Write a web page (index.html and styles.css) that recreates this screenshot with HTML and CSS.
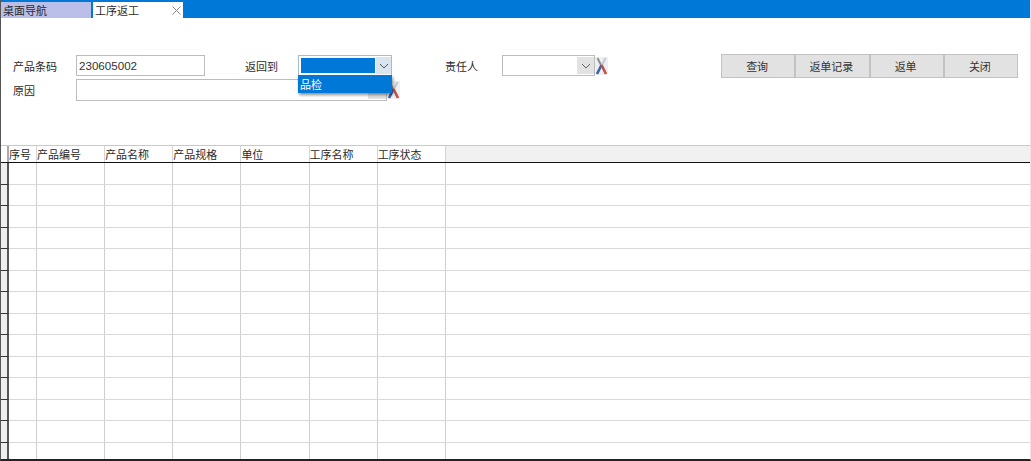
FILE: index.html
```html
<!DOCTYPE html>
<html lang="zh-CN">
<head>
<meta charset="utf-8">
<title>工序返工</title>
<link rel="stylesheet" href="styles.css">
</head>
<body>
<div class="app">
  <div class="tabbar">
    <div class="tab tab-nav">桌面导航</div>
    <div class="tab tab-active"><span>工序返工</span>
      <svg class="tab-close" width="9" height="9" viewBox="0 0 9 9"><path d="M.5.5l8 8M8.500.5l-8 8" stroke="#8a8a8a" fill="none"/></svg>
    </div>
  </div>
  <div class="form">
    <div class="row row-top">
      <label class="lbl lbl-code">产品条码</label>
      <input class="input input-code" value="230605002">
      <label class="lbl lbl-back">返回到</label>
      <div class="combo-wrap">
        <div class="combo combo-open">
          <div class="combo-value"></div>
          <div class="combo-btn"><svg width="10" height="6" viewBox="0 0 10 6"><path d="M1 1l4 4 4-4" stroke="#555" fill="none"/></svg></div>
        </div>
        <div class="dropdown">品检</div>
      </div>
      <label class="lbl lbl-owner">责任人</label>
      <div class="combo combo-owner">
        <div class="combo-value"></div>
        <div class="combo-btn"><svg width="10" height="6" viewBox="0 0 10 6"><path d="M1 1l4 4 4-4" stroke="#666" fill="none"/></svg></div>
      </div>
      <svg class="clear" width="13" height="18" viewBox="0 0 13 18"><rect width="13" height="18" fill="#efefef"/><path d="M2.500 1l4 8" stroke="#8a8f96" stroke-width="2" fill="none"/><path d="M10.500 1L7 8" stroke="#c2c8ce" stroke-width="2" fill="none"/><path d="M6.500 8L2 17" stroke="#3a66b0" stroke-width="2.600" fill="none"/><path d="M6.500 8l4.500 9" stroke="#c2504a" stroke-width="2.600" fill="none"/></svg>
      <div class="buttons">
        <button class="btn">查询</button>
        <button class="btn">返单记录</button>
        <button class="btn">返单</button>
        <button class="btn">关闭</button>
      </div>
    </div>
    <div class="row row-reason">
      <label class="lbl lbl-code">原因</label>
      <div class="combo combo-reason">
        <div class="combo-value"></div>
        <div class="combo-btn"></div>
      </div>
      <svg class="clear" width="13" height="18" viewBox="0 0 13 18"><rect width="13" height="18" fill="#efefef"/><path d="M2.500 1l4 8" stroke="#8a8f96" stroke-width="2" fill="none"/><path d="M10.500 1L7 8" stroke="#c2c8ce" stroke-width="2" fill="none"/><path d="M6.500 8L2 17" stroke="#3a66b0" stroke-width="2.600" fill="none"/><path d="M6.500 8l4.500 9" stroke="#c2504a" stroke-width="2.600" fill="none"/></svg>
    </div>
  </div>
  <div class="grid">
    <div class="grid-row grid-head">
      <div class="rh"></div>
      <div class="c c1">序号</div><div class="c c2">产品编号</div><div class="c c2">产品名称</div><div class="c c2">产品规格</div><div class="c c2">单位</div><div class="c c2">工序名称</div><div class="c c2">工序状态</div><div class="c cfill"></div>
    </div>
    <div class="grid-row"><div class="rh"></div><div class="c c1"></div><div class="c c2"></div><div class="c c2"></div><div class="c c2"></div><div class="c c2"></div><div class="c c2"></div><div class="c c2"></div><div class="c cfill"></div></div>
    <div class="grid-row"><div class="rh"></div><div class="c c1"></div><div class="c c2"></div><div class="c c2"></div><div class="c c2"></div><div class="c c2"></div><div class="c c2"></div><div class="c c2"></div><div class="c cfill"></div></div>
    <div class="grid-row"><div class="rh"></div><div class="c c1"></div><div class="c c2"></div><div class="c c2"></div><div class="c c2"></div><div class="c c2"></div><div class="c c2"></div><div class="c c2"></div><div class="c cfill"></div></div>
    <div class="grid-row"><div class="rh"></div><div class="c c1"></div><div class="c c2"></div><div class="c c2"></div><div class="c c2"></div><div class="c c2"></div><div class="c c2"></div><div class="c c2"></div><div class="c cfill"></div></div>
    <div class="grid-row"><div class="rh"></div><div class="c c1"></div><div class="c c2"></div><div class="c c2"></div><div class="c c2"></div><div class="c c2"></div><div class="c c2"></div><div class="c c2"></div><div class="c cfill"></div></div>
    <div class="grid-row"><div class="rh"></div><div class="c c1"></div><div class="c c2"></div><div class="c c2"></div><div class="c c2"></div><div class="c c2"></div><div class="c c2"></div><div class="c c2"></div><div class="c cfill"></div></div>
    <div class="grid-row"><div class="rh"></div><div class="c c1"></div><div class="c c2"></div><div class="c c2"></div><div class="c c2"></div><div class="c c2"></div><div class="c c2"></div><div class="c c2"></div><div class="c cfill"></div></div>
    <div class="grid-row"><div class="rh"></div><div class="c c1"></div><div class="c c2"></div><div class="c c2"></div><div class="c c2"></div><div class="c c2"></div><div class="c c2"></div><div class="c c2"></div><div class="c cfill"></div></div>
    <div class="grid-row"><div class="rh"></div><div class="c c1"></div><div class="c c2"></div><div class="c c2"></div><div class="c c2"></div><div class="c c2"></div><div class="c c2"></div><div class="c c2"></div><div class="c cfill"></div></div>
    <div class="grid-row"><div class="rh"></div><div class="c c1"></div><div class="c c2"></div><div class="c c2"></div><div class="c c2"></div><div class="c c2"></div><div class="c c2"></div><div class="c c2"></div><div class="c cfill"></div></div>
    <div class="grid-row"><div class="rh"></div><div class="c c1"></div><div class="c c2"></div><div class="c c2"></div><div class="c c2"></div><div class="c c2"></div><div class="c c2"></div><div class="c c2"></div><div class="c cfill"></div></div>
    <div class="grid-row"><div class="rh"></div><div class="c c1"></div><div class="c c2"></div><div class="c c2"></div><div class="c c2"></div><div class="c c2"></div><div class="c c2"></div><div class="c c2"></div><div class="c cfill"></div></div>
    <div class="grid-row"><div class="rh"></div><div class="c c1"></div><div class="c c2"></div><div class="c c2"></div><div class="c c2"></div><div class="c c2"></div><div class="c c2"></div><div class="c c2"></div><div class="c cfill"></div></div>
    <div class="grid-row grid-last"><div class="rh"></div><div class="c c1"></div><div class="c c2"></div><div class="c c2"></div><div class="c c2"></div><div class="c c2"></div><div class="c c2"></div><div class="c c2"></div><div class="c cfill"></div></div>
  </div>
</div>
</body>
</html>
```
FILE: styles.css
```css
* { box-sizing: border-box; }
html, body { margin: 0; padding: 0; background: #fff; }
body { overflow: hidden; }
.app {
  width: 1031px;
  height: 461px;
  display: flex;
  flex-direction: column;
  border-left: 1px solid #555;
  border-right: 1px solid #e6e6e6;
  border-bottom: 2px solid #222;
  font: 11px "Noto Sans CJK SC", "Liberation Sans", sans-serif;
  color: #2a2a2a;
  overflow: hidden;
}
.tabbar {
  height: 18px;
  flex: none;
  display: flex;
  gap: 2px;
  align-items: flex-end;
  background: #0078d7;
  margin-left: -1px;
  padding-left: 1px;
}
.tab { width: 90px; height: 16px; line-height: 16px; padding-left: 2px; }
.tab-nav { background: #b9bfe9; }
.tab-active { background: #fff; display: flex; justify-content: space-between; align-items: center; padding-right: 2px; }
.form { height: 127px; flex: none; padding-top: 37px; }
.row { display: flex; align-items: center; }
.row-top { height: 21px; }
.row-reason { height: 22px; margin-top: 3px; }
.lbl { white-space: nowrap; }
.lbl-code { width: 75px; padding-left: 12px; }
.input { height: 21px; border: 1px solid #bcbcbc; padding: 0 2px; font: 11.6px "Liberation Sans", sans-serif; color: #333; outline: none; }
.input-code { width: 129px; }
.lbl-back { margin-left: 40px; width: 53px; }
.combo-wrap { position: relative; width: 94px; height: 21px; }
.combo { display: flex; height: 21px; border: 1px solid #bcbcbc; background: #fff; }
.combo-value { flex: 1; }
.combo-btn { width: 17px; margin: 1px 0; background: #e2e2e2; display: flex; align-items: center; justify-content: center; }
.combo-open { width: 94px; padding: 1px 0 1px 2px; border-color: #a9bccb; }
.combo-open .combo-value { background: #0078d7; margin: 1px 1px 1px 0; }
.combo-open .combo-btn { margin: 0; width: 15px; background: #d9e4ee; }
.dropdown {
  position: absolute;
  left: 0;
  top: 20px;
  width: 94px;
  height: 18px;
  padding-left: 2px;
  background: #0078d7;
  color: #fff;
  line-height: 18px;
  box-shadow: 1px 2px 3px rgba(0, 0, 0, .45);
  z-index: 2;
}
.lbl-owner { margin-left: 53px; width: 57px; }
.combo-owner { width: 93px; }
.combo-reason { width: 311px; height: 22px; }
.combo-reason .combo-btn { width: 18px; }
.clear { flex: none; }
.buttons { display: flex; margin-left: 113px; }
.btn {
  width: 74.250px;
  height: 24px;
  margin: 0;
  border: 1px solid #c2c2c2;
  background: #e2e2e2;
  color: #333;
  font: inherit;
  padding: 0 2px 0 0;
}
.grid { flex: 1; border-top: 1px solid #c9c9c9; min-height: 0; }
.grid-row { display: flex; height: 21.500px; border-bottom: 1px solid #d9d9d9; }
.grid-head { height: 17px; border-bottom: 1px solid #111; line-height: 16px; }
.rh { width: 8px; flex: none; background: #eee; border-right: 2px solid #555; border-bottom: 1px solid #333; margin-bottom: -1px; }
.grid-head .rh { background: #fff; border-bottom: 0; border-right-color: #aaa; margin-bottom: 0; }
.c { border-right: 1px solid #cfcfcf; flex: none; white-space: nowrap; }
.grid-head .c { border-right-color: #d5d5d5; }
.c1 { width: 28px; }
.c2 { width: 68.140px; }
.cfill { flex: 1; border-right: 0; }
.grid-head .cfill { background: #f1f1f1; }
```
